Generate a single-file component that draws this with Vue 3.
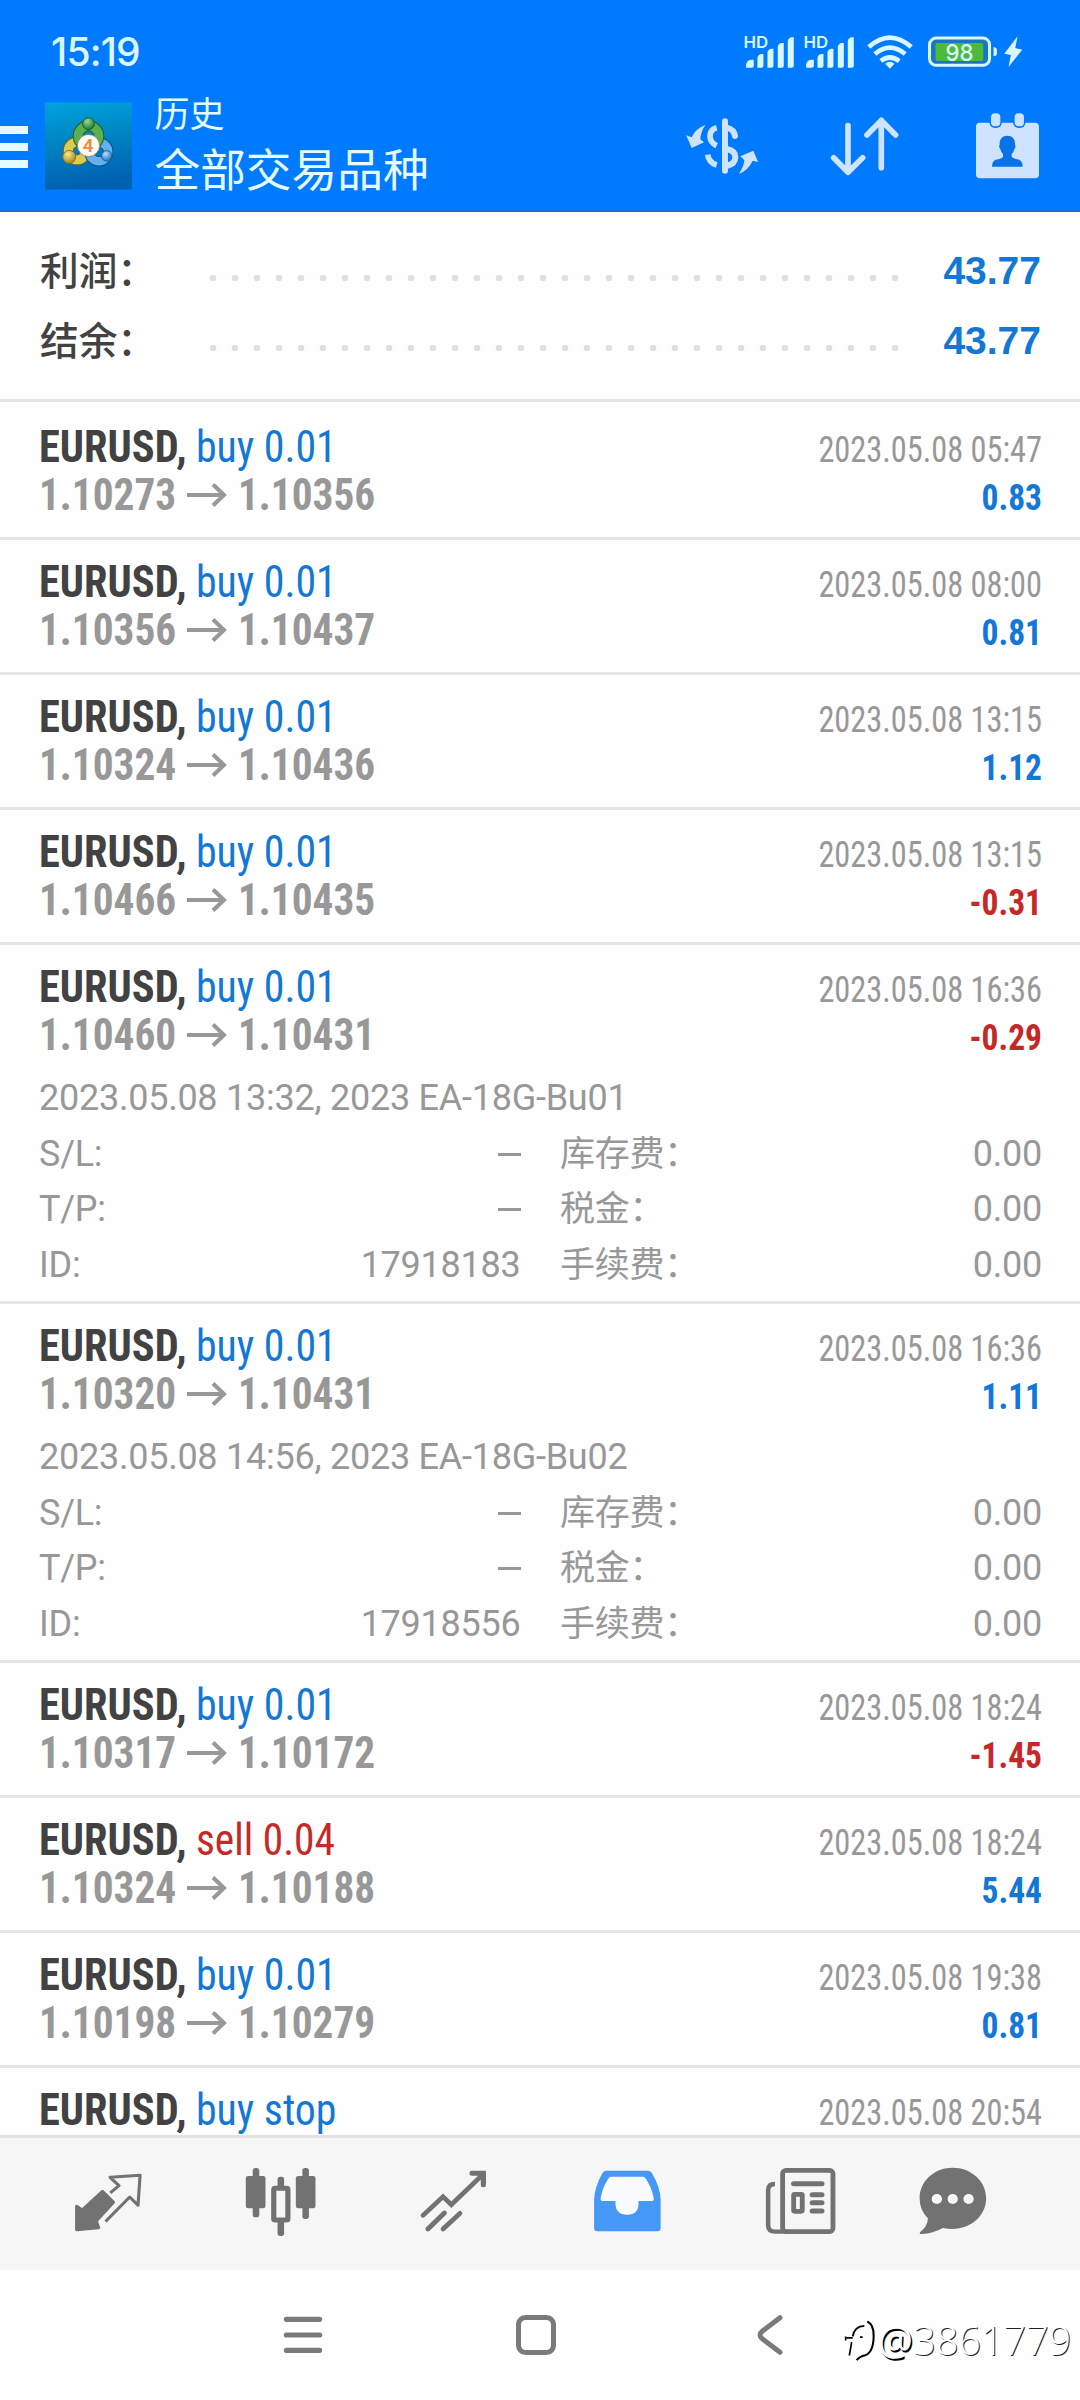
<script setup>
const totals = [
  { label: '利润：', value: '43.77' },
  { label: '结余：', value: '43.77' },
]

const deals = [
  { side: 'buy', volume: '0.01', from: '1.10273', to: '1.10356', time: '2023.05.08 05:47', profit: '0.83' },
  { side: 'buy', volume: '0.01', from: '1.10356', to: '1.10437', time: '2023.05.08 08:00', profit: '0.81' },
  { side: 'buy', volume: '0.01', from: '1.10324', to: '1.10436', time: '2023.05.08 13:15', profit: '1.12' },
  { side: 'buy', volume: '0.01', from: '1.10466', to: '1.10435', time: '2023.05.08 13:15', profit: '-0.31' },
  {
    side: 'buy', volume: '0.01', from: '1.10460', to: '1.10431', time: '2023.05.08 16:36', profit: '-0.29',
    comment: '2023.05.08 13:32, 2023 EA-18G-Bu01', id: '17918183',
  },
  {
    side: 'buy', volume: '0.01', from: '1.10320', to: '1.10431', time: '2023.05.08 16:36', profit: '1.11',
    comment: '2023.05.08 14:56, 2023 EA-18G-Bu02', id: '17918556',
  },
  { side: 'buy', volume: '0.01', from: '1.10317', to: '1.10172', time: '2023.05.08 18:24', profit: '-1.45' },
  { side: 'sell', volume: '0.04', from: '1.10324', to: '1.10188', time: '2023.05.08 18:24', profit: '5.44' },
  { side: 'buy', volume: '0.01', from: '1.10198', to: '1.10279', time: '2023.05.08 19:38', profit: '0.81' },
  { side: 'buy', volume: 'stop', time: '2023.05.08 20:54' },
]

const detailRows = (deal) => [
  { left: 'S/L:', value: '', right: '库存费：' },
  { left: 'T/P:', value: '', right: '税金：' },
  { left: 'ID:', value: deal.id, right: '手续费：' },
]
</script>

<template>
  <div class="screen">
    <header class="header">
      <div class="status">
        <span class="clock">15:19</span>
        <svg class="status-icons" viewBox="300 100 860 110" fill="#d9f7ff">
          <g v-for="dx in [0, 180]" :key="dx" :transform="`translate(${dx} 0)`">
            <text x="310" y="144" font-size="48" font-weight="600" textLength="74" lengthAdjust="spacingAndGlyphs">HD</text>
            <path d="M318 204v-10q2-12 14-14h9v18q0 6-6 6z" />
            <path d="M352 204v-30q3-11 12-11h6v35q0 6-6 6z" />
            <path d="M382 204v-46q3-11 12-11h6v51q0 6-6 6z" />
            <path d="M413 204v-63q3-11 12-11h6v68q0 6-6 6z" />
            <path d="M443 204v-80q3-11 12-11h6v85q0 6-6 6z" />
          </g>
          <g fill="none" stroke="#d9f7ff" stroke-width="14">
            <path d="M686 142Q749 86 813 142" />
            <path d="M704 163Q749 125 795 163" />
            <path d="M722 184Q749 163 777 184" />
          </g>
          <path d="M735 192q14-12 28 0l-14 15z" />
          <rect x="868" y="115" width="180" height="82" rx="20" fill="#1b74c4" stroke="#d9f7ff" stroke-width="9" />
          <rect x="886" y="130" width="143" height="54" rx="5" fill="#4cbb3a" />
          <text x="916" y="183" font-size="70" font-weight="500" textLength="84" lengthAdjust="spacingAndGlyphs">98</text>
          <path d="M1060 142q10 2 10 8v12q0 6-10 8z" />
          <path d="M1132 110l-40 52 20 4-7 36 41-52-21-5z" />
        </svg>
      </div>
      <div class="toolbar">
        <div class="menu"><i></i><i></i><i></i></div>
        <svg class="logo" viewBox="0 0 88 88">
          <defs>
            <linearGradient id="bg" x1="0" y1="0" x2="0.15" y2="1">
              <stop offset="0" stop-color="#00a3de" />
              <stop offset="0.45" stop-color="#0086c4" />
              <stop offset="1" stop-color="#0060b2" />
            </linearGradient>
            <radialGradient id="gr" cx="0.4" cy="0.3" r="0.7"><stop offset="0" stop-color="#9ed796" /><stop offset="1" stop-color="#1b7a2c" /></radialGradient>
            <radialGradient id="ye" cx="0.4" cy="0.3" r="0.7"><stop offset="0" stop-color="#f7e993" /><stop offset="1" stop-color="#a88a14" /></radialGradient>
            <radialGradient id="bl" cx="0.4" cy="0.3" r="0.7"><stop offset="0" stop-color="#b5e2ff" /><stop offset="1" stop-color="#1c74bd" /></radialGradient>
          </defs>
          <rect width="88" height="88" fill="url(#bg)" />
          <g fill="none">
            <circle cx="32.5" cy="49" r="9" stroke="#6f6413" stroke-width="11" />
            <circle cx="32.5" cy="49" r="9" stroke="#dccb52" stroke-width="9" />
            <circle cx="54.5" cy="50" r="9.5" stroke="#0d4c86" stroke-width="10.5" />
            <circle cx="54.5" cy="50" r="9.5" stroke="#64b1ec" stroke-width="8.5" />
            <circle cx="44" cy="34" r="10.5" stroke="#175f25" stroke-width="11" />
            <circle cx="44" cy="34" r="10.5" stroke="#58b052" stroke-width="9" />
          </g>
          <circle cx="44" cy="21.5" r="6" fill="url(#gr)" stroke="#176427" />
          <circle cx="24.5" cy="55" r="6.5" fill="url(#ye)" stroke="#8a7517" />
          <circle cx="62.4" cy="54" r="5.3" fill="url(#bl)" stroke="#17629f" />
          <circle cx="44" cy="43.5" r="11.2" fill="#fffaf3" stroke="#8e7954" stroke-width="0.8" />
          <text x="43.5" y="50.5" text-anchor="middle" font-size="19" font-weight="600" fill="#f08a3c">4</text>
        </svg>
        <div class="titles">
          <span class="title-small">历史</span>
          <span class="title">全部交易品种</span>
        </div>
        <svg class="act-dollar" viewBox="138 348 216 168" fill="none" stroke="#cfe3ff" stroke-width="18">
          <path d="M255 358V506" stroke-linecap="round" />
          <path d="M230 377Q210 382 210 403Q210 422 230 431M203 458Q206 482 230 489" stroke-width="17" />
          <path d="M260 377Q282 382 285 402" stroke-linecap="round" />
          <path d="M260 441Q286 446 286 466Q286 486 260 492" />
          <path d="M196 369Q182 390 181 412L192 421L155 438Q147 418 138 400L155 406Q166 380 196 369z" fill="#cfe3ff" stroke="none" />
          <path d="M297 515Q311 495 313 475L301 463L340 446Q347 462 354 480L338 476Q325 505 297 515z" fill="#cfe3ff" stroke="none" />
        </svg>
        <svg class="act-sort" viewBox="574 348 202 176" fill="none" stroke="#cfe3ff" stroke-width="17" stroke-linecap="round" stroke-linejoin="round">
          <path d="M625 374V514M582 470L625 514L669 470" />
          <path d="M725 500V358M682 402L725 358L768 402" />
        </svg>
        <svg class="act-cal" viewBox="1009 337 189 196" fill="#cfe3ff">
          <rect x="1009" y="366" width="189" height="167" rx="12" />
          <rect x="1049" y="330" width="38" height="52" rx="17" fill="#007aff" />
          <rect x="1120" y="330" width="38" height="52" rx="17" fill="#007aff" />
          <rect x="1054" y="338" width="28" height="39" rx="12" />
          <rect x="1125" y="338" width="28" height="39" rx="12" />
          <path d="M1103 405c16 0 24 11 23 27q4 5-2 14q-2 9-8 14v8q4 6 22 9q11 4 11 21h-92q0-17 11-21q18-3 22-9v-8q-6-5-8-14q-6-9-2-14c-1-16 7-27 23-27z" fill="#0872e8" />
        </svg>
      </div>
    </header>

    <section class="summary">
      <div v-for="t in totals" :key="t.label" class="total">
        <span class="total-label">{{ t.label }}</span>
        <span class="leader"></span>
        <span class="total-value">{{ t.value }}</span>
      </div>
    </section>

    <main class="list">
      <article v-for="(d, i) in deals" :key="i" class="deal" :class="{ open: d.comment }">
        <div class="line">
          <span class="symbol">EURUSD,</span>
          <span class="side" :class="d.side">{{ d.side }} {{ d.volume }}</span>
          <span class="time">{{ d.time }}</span>
        </div>
        <div v-if="d.from" class="line">
          <span class="price">{{ d.from }}</span>
          <svg class="arrow" viewBox="0 0 40 24" fill="none" stroke="#989898" stroke-width="4">
            <path d="M0 12H37M26 1.5L37 12L26 22.5" />
          </svg>
          <span class="price">{{ d.to }}</span>
          <span class="profit" :class="{ loss: d.profit[0] === '-' }">{{ d.profit }}</span>
        </div>
        <div v-if="d.comment" class="details">
          <div class="detail">{{ d.comment }}</div>
          <div v-for="r in detailRows(d)" :key="r.left" class="detail">
            <span class="detail-name">{{ r.left }}</span>
            <span class="detail-value"><template v-if="r.value">{{ r.value }}</template><i v-else class="dash"></i></span>
            <span class="detail-label">{{ r.right }}</span>
            <span class="detail-sum">0.00</span>
          </div>
        </div>
      </article>
    </main>

    <nav class="tabs">
      <div class="tab">
        <svg viewBox="198 342 232 240" preserveAspectRatio="none" fill="none" stroke="#727272" stroke-width="9" stroke-linejoin="round">
          <path d="M298 424L330 457L280 513L287 533L223 539V469L239 480z" fill="#727272" />
          <path d="M324 426L346 407L320 382L407 376L401 466L377 441L310 511" stroke-linecap="square" />
        </svg>
      </div>
      <div class="tab">
        <svg viewBox="701 342 232 240" preserveAspectRatio="none" fill="#727272">
          <rect x="735" y="354" width="19" height="148" rx="8" />
          <rect x="715" y="378" width="57" height="97" rx="7" />
          <rect x="879" y="354" width="19" height="153" rx="8" />
          <rect x="860" y="378" width="57" height="97" rx="7" />
          <rect x="807" y="380" width="19" height="40" rx="8" />
          <rect x="807" y="505" width="19" height="53" rx="8" />
          <rect x="796" y="415" width="41" height="95" rx="4" fill="#f6f6f6" stroke="#727272" stroke-width="15" />
        </svg>
      </div>
      <div class="tab">
        <svg viewBox="1204.8 342 232 240" preserveAspectRatio="none" fill="none" stroke="#727272" stroke-width="14" stroke-linecap="round">
          <path d="M1231 496L1289 440L1313 464L1404 374" stroke-linejoin="miter" />
          <path d="M1373 370H1406V404" stroke-width="15" />
          <path d="M1245 537L1293 489M1289 537L1338 490" />
        </svg>
      </div>
      <div class="tab">
        <svg viewBox="134.500 342 232 240" preserveAspectRatio="none">
          <path d="M192 362H316Q322 362 326 370Q350 412 351 450V534Q351 544 341 544H168Q158 544 158 534V450Q159 412 182 370Q186 362 192 362z" fill="#4698f7" />
          <path d="M207 380H300Q305 380 308 386Q326 414 331 445Q332 453 326 453H287V462Q286 494 254 494Q221 494 220 462V453H182Q176 453 177 445Q181 414 199 386Q202 380 207 380z" fill="#f9fbff" />
        </svg>
      </div>
      <div class="tab">
        <svg viewBox="637.500 342 232 240" preserveAspectRatio="none" fill="none" stroke="#727272">
          <rect x="706" y="361" width="146" height="184" rx="10" stroke-width="14" />
          <path d="M684 402Q664 402 664 420V526Q664 545 684 545H720" stroke-width="13" />
          <path d="M738 401H820M792 434H820M792 458H820M792 483H820" stroke-width="15" stroke-linecap="round" />
          <rect x="738" y="433" width="25" height="51" rx="3" stroke-width="14" />
        </svg>
      </div>
      <div class="tab tab-chat">
        <svg viewBox="1078 342 232 240" preserveAspectRatio="none" fill="#727272">
          <path d="M1199 353C1252 353 1296 393 1296 445S1252 537 1199 537Q1184 537 1170 534Q1142 551 1109 552Q1100 552 1105 546Q1127 528 1127 505Q1103 482 1103 445C1103 393 1146 353 1199 353z" />
          <g fill="#f8f8f8"><circle cx="1153" cy="447" r="15" /><circle cx="1199" cy="447" r="15" /><circle cx="1245" cy="447" r="15" /></g>
        </svg>
      </div>
    </nav>

    <footer class="sysnav">
      <svg class="sys-menu" viewBox="0 0 40 40" stroke="#7a7a7a" stroke-width="5.2" stroke-linecap="round"><path d="M3.4 4.3H36.6M3.4 20H36.6M3.4 35.3H36.6" /></svg>
      <svg class="sys-home" viewBox="0 0 40 40" fill="none" stroke="#7a7a7a" stroke-width="5"><rect x="2.5" y="2.5" width="35" height="35" rx="7" /></svg>
      <svg class="sys-back" viewBox="0 0 26 40" fill="none" stroke="#7a7a7a" stroke-width="5" stroke-linecap="round"><path d="M23 2.7L5.5 16Q0.5 20 5.5 24L23 37.3" /></svg>
    </footer>

    <div class="watermark">
      <svg viewBox="45 72 90 122" fill="none" stroke="#000" stroke-width="5">
        <path d="M47 121V133M50 125H68M58 178L65 138M68 121Q73 90 103 89M90 123H98" />
        <path d="M112 76Q132 86 131 120Q130 168 106 177Q89 180 80 192" stroke-width="6" />
      </svg>
      <span class="at">@</span><span>3861779</span>
    </div>
  </div>
</template>

<style>
body {
  background: #fefefe;
}
</style>

<style scoped>
.screen {
  position: relative;
  display: flex;
  flex-direction: column;
  width: 1080px;
  height: 2400px;
  overflow: hidden;
  background: #fefefe;
  color: #989898;
  font-family: Roboto, "Noto Sans CJK SC", sans-serif;
  white-space: nowrap;
}
svg {
  display: block;
  flex: none;
  overflow: visible;
}

.header {
  box-sizing: border-box;
  height: 212px;
  flex: none;
  background: #007aff;
  border-bottom: 2px solid #1b6fd2;
  color: #e4fbff;
}
.status {
  display: flex;
  justify-content: space-between;
  height: 82px;
  padding: 0 53px 0 51px;
}
.clock {
  margin-top: 28px;
  font: 500 39px/48px Inter, sans-serif;
  color: #d9f7ff;
  letter-spacing: -0.8px;
}
.status-icons {
  width: 287px;
  height: 36.7px;
  margin-top: 33.3px;
  font-family: Inter, sans-serif;
}
.toolbar {
  display: flex;
  align-items: center;
  height: 128px;
  padding-right: 41px;
}
.menu {
  display: flex;
  flex-direction: column;
  gap: 9px;
  width: 27.5px;
  margin: 2px 17px 0 0;
}
.menu i {
  height: 7.7px;
  background: #e4fbff;
}
.logo {
  width: 87px;
  height: 88px;
}
.titles {
  display: flex;
  flex-direction: column;
  flex: 1;
  margin-left: 23px;
  padding-top: 2px;
}
.title-small {
  font-size: 35px;
  line-height: 50px;
}
.title {
  font-size: 45.7px;
  line-height: 62px;
}
.act-dollar {
  width: 72px;
  height: 56px;
}
.act-sort {
  width: 67.3px;
  height: 58.7px;
  margin: 0 77.7px 0 73.3px;
}
.act-cal {
  width: 63px;
  height: 65.3px;
}

.summary {
  box-sizing: border-box;
  flex: none;
  height: 190px;
  padding: 24px 39px 0 40px;
  border-bottom: 3px solid #e5e5e5;
}
.total {
  display: flex;
  align-items: center;
  height: 70px;
}
.total-label {
  width: 162px;
  padding-bottom: 7px;
  font-size: 38.7px;
  font-weight: 500;
  color: #424242;
}
.leader {
  width: 704px;
  height: 6px;
  margin-top: 14px;
  background: radial-gradient(circle at center, #e0e0e0 3px, transparent 3.7px) 0 0 / 22px 6px;
}
.total-value {
  margin-left: auto;
  font: 700 39px/46px "Liberation Sans", sans-serif;
  color: #1277d6;
}

.list {
  flex: 1;
  min-height: 0;
  overflow: hidden;
  padding-top: 3px;
}
.deal {
  height: 132px;
  box-sizing: content-box;
  padding: 0 38px 0 39px;
  border-bottom: 3px solid #e5e5e5;
}
.deal.open {
  height: 356px;
}
.line {
  display: flex;
  align-items: baseline;
  height: 48px;
  line-height: 48px;
  font-size: 44px;
  font-stretch: 75%;
}
.line:first-child {
  padding-top: 18px;
}
.symbol {
  width: 157px;
  font-weight: 700;
  color: #424242;
  transform: scaleX(0.965);
  transform-origin: left;
}
.side {
  transform: scaleX(0.95);
  transform-origin: left;
}
.side.buy {
  color: #1277d6;
}
.side.sell {
  color: #c62828;
  transform: scaleX(0.94);
}
.time {
  margin-left: auto;
  font-size: 36px;
  transform: scaleX(0.898);
  transform-origin: right;
}
.price {
  width: 137px;
  font-weight: 700;
  transform: scaleX(0.938);
  transform-origin: left;
}
.arrow {
  width: 40px;
  height: 24px;
  margin: 0 11px;
  align-self: center;
}
.profit {
  margin-left: auto;
  font-size: 36px;
  font-weight: 700;
  color: #1277d6;
  transform: scaleX(0.93);
  transform-origin: right;
}
.profit.loss {
  color: #c62828;
}
.details {
  margin-top: 12px;
}
.detail {
  display: flex;
  height: 55.5px;
  font-size: 36px;
  line-height: 55.5px;
  letter-spacing: -0.25px;
}
.detail-name {
  width: 120px;
}
.detail-value {
  display: flex;
  justify-content: flex-end;
  align-items: center;
  width: 361.5px;
}
.dash {
  width: 23px;
  height: 3px;
  background: #989898;
}
.detail-label {
  margin-left: 39.5px;
  font-size: 35px;
}
.detail-sum {
  margin-left: auto;
}

.tabs {
  box-sizing: border-box;
  display: flex;
  flex: none;
  height: 135px;
  padding: 0 21.5px;
  border-top: 3px solid #e2e2e2;
  background: #f6f6f6;
}
.tab {
  display: flex;
  flex: 1;
  align-items: center;
  justify-content: center;
}
.tab svg {
  width: 80px;
  height: 80px;
}
.tab-chat svg {
  margin-right: 43px;
}

.sysnav {
  display: flex;
  align-items: center;
  flex: none;
  height: 130px;
  padding-left: 283px;
}
.sys-menu {
  width: 40px;
  height: 40px;
}
.sys-home {
  width: 40px;
  height: 40px;
  margin: 0 201px 0 193px;
}
.sys-back {
  width: 26px;
  height: 40px;
}

.watermark {
  position: absolute;
  right: 9px;
  bottom: 33px;
  display: flex;
  align-items: center;
  font: 300 39.5px/54px "Noto Sans", sans-serif;
  color: #fff;
  text-shadow: 1px 1px 0 #222;
}
.watermark svg {
  width: 30px;
  height: 41px;
  margin-right: 3px;
}
.at {
  font-weight: 400;
  text-shadow: 1.5px 1.5px 0 #000;
}
</style>
